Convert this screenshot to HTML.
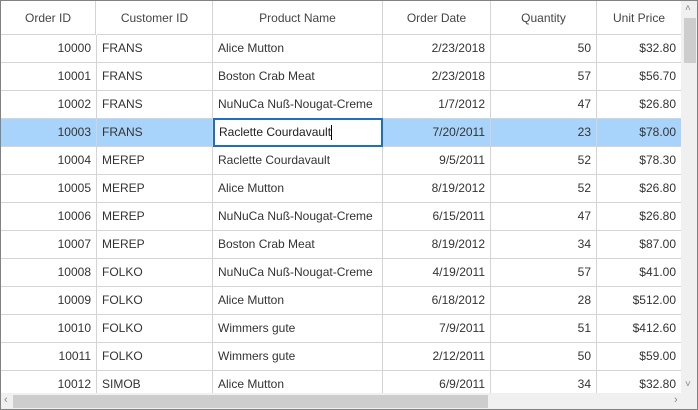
<!DOCTYPE html><html><head><style>
*{margin:0;padding:0;box-sizing:border-box}
body{width:698px;height:410px;overflow:hidden;background:#fff;font-family:"Liberation Sans",sans-serif;font-size:12px;color:#333}
#g{position:absolute;left:0;top:0;width:698px;height:410px;border:1px solid #828282;overflow:hidden}
.c{position:absolute;height:28px;line-height:27px;white-space:nowrap;padding:0 5px;border-right:1px solid #d4d4d4;border-bottom:1px solid #d4d4d4;overflow:hidden}
.r{text-align:right}
.h{height:34px;line-height:34px;text-align:center;color:#444}
</style></head><body><div id="g"><div id="t"></div>
<div style="position:absolute;left:680px;top:0;width:17px;height:392px;background:#f0f0f0"></div>
<div style="position:absolute;left:683px;top:17px;width:12px;height:45px;background:#cdcdcd"></div>
<div style="position:absolute;left:684px;top:2px;font-size:10px;color:#888">&#708;</div>
<div style="position:absolute;left:684px;top:378px;font-size:10px;color:#888">&#709;</div>
<div style="position:absolute;left:0;top:392px;width:697px;height:17px;background:#f0f0f0"></div>
<div style="position:absolute;left:12px;top:394px;width:475px;height:13px;background:#cdcdcd"></div>
<div style="position:absolute;left:3px;top:393px;font-size:11px;color:#888">&#8249;</div>
<div style="position:absolute;left:673px;top:393px;font-size:11px;color:#888">&#8250;</div>
</div>
<script>
var X=[0,96,212,382,490,596,681];
var H=["Order ID","Customer ID","Product Name","Order Date","Quantity","Unit Price"];
var D=[["10000","FRANS","Alice Mutton","2/23/2018","50","$32.80"],["10001","FRANS","Boston Crab Meat","2/23/2018","57","$56.70"],["10002","FRANS","NuNuCa Nuß-Nougat-Creme","1/7/2012","47","$26.80"],["10003","FRANS","Raclette Courdavault","7/20/2011","23","$78.00"],["10004","MEREP","Raclette Courdavault","9/5/2011","52","$78.30"],["10005","MEREP","Alice Mutton","8/19/2012","52","$26.80"],["10006","MEREP","NuNuCa Nuß-Nougat-Creme","6/15/2011","47","$26.80"],["10007","MEREP","Boston Crab Meat","8/19/2012","34","$87.00"],["10008","FOLKO","NuNuCa Nuß-Nougat-Creme","4/19/2011","57","$41.00"],["10009","FOLKO","Alice Mutton","6/18/2012","28","$512.00"],["10010","FOLKO","Wimmers gute","7/9/2011","51","$412.60"],["10011","FOLKO","Wimmers gute","2/12/2011","50","$59.00"],["10012","SIMOB","Alice Mutton","6/9/2011","34","$32.80"]];
var s="";
for(var i=0;i<6;i++)s+='<div class="c h" style="left:'+X[i]+'px;top:0;width:'+(X[i+1]-X[i]+(i==0?-1:0))+'px">'+H[i]+'</div>';
for(var r=0;r<13;r++){var y=34+r*28;for(var i=0;i<6;i++){var al=(i==1||i==2)?'':' r';var bg=r==3?'background:#a8d4fb;':'';
s+='<div class="c'+al+'" style="'+bg+'left:'+(i==0?-1:X[i])+'px;top:'+y+'px;width:'+(X[i+1]-X[i]+(i==0?1:0))+'px">'+D[r][i]+'</div>';}}
s+='<div style="position:absolute;left:212px;top:117px;width:170px;height:29px;border:2px solid #1e6fc0;background:#fff;line-height:25px;padding-left:4px;color:#222">Raclette Courdavault<span style="display:inline-block;width:1px;height:15px;background:#000;vertical-align:middle"></span></div>';
document.getElementById("t").innerHTML=s;
</script></body></html>
